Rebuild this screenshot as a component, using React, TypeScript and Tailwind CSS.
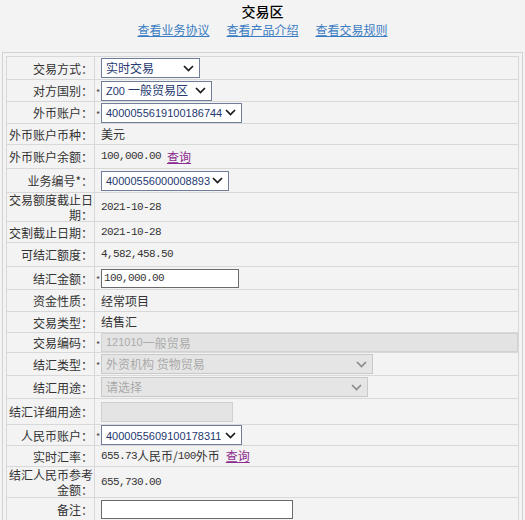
import React from "react";

const cjk = "font-['Noto_Sans_CJK_SC',sans-serif]";
const mono = "font-['Liberation_Mono',monospace] text-[11px] tracking-[-0.6px] text-[#333]";

function Chevron({ muted }: { muted?: boolean }) {
  return (
    <svg width="11" height="7" viewBox="0 0 11 7" className="shrink-0">
      <polyline
        points="1,1 5.5,5.5 10,1"
        fill="none"
        stroke={muted ? "#8a8a8a" : "#1a1a1a"}
        strokeWidth="1.7"
      />
    </svg>
  );
}

function Star({ on }: { on?: boolean }) {
  return (
    <span className="w-[5px] shrink-0 pt-[3px] text-[9px] leading-none text-[#444]">
      {on ? "*" : ""}
    </span>
  );
}

function Select({
  w,
  children,
  muted,
}: {
  w: string;
  children: React.ReactNode;
  muted?: boolean;
}) {
  return (
    <div
      className={`flex h-[20px] items-center justify-between border pl-[4px] pr-[5px] ${w} ${
        muted
          ? "border-[#c9c9c9] bg-[#e5e5e5] text-[#a9a9a9]"
          : "border-[#6f7d98] bg-white text-[#25386f]"
      }`}
    >
      <span className="truncate">{children}</span>
      <Chevron muted={muted} />
    </div>
  );
}

function Row({
  label,
  h,
  children,
}: {
  label: React.ReactNode;
  h: string;
  children?: React.ReactNode;
}) {
  return (
    <div className={`flex border-b border-[#d8d8d8] ${h}`}>
      <div className="flex w-[88px] shrink-0 items-center justify-end whitespace-nowrap border-r border-[#d8d8d8] pr-[1px] text-right text-[12px] leading-[15px] text-[#333]">
        {label}
      </div>
      <div className="flex min-w-0 flex-1 items-center pl-[1px] text-[12px] text-[#333]">
        {children}
      </div>
    </div>
  );
}

function Query() {
  return <span className={`${cjk} ml-[6px] text-[12px] text-[#8b2c8e] underline`}>查询</span>;
}

export default function App() {
  return (
    <div className={`${cjk} h-[520px] w-[525px] overflow-hidden bg-[#f3f3f3]`}>
      {/* title + help links */}
      <div className="flex h-[52px] flex-col items-center pt-[3px]">
        <div className="text-[14px] leading-[17px] font-medium text-black">交易区</div>
        <div className="mt-[2px] flex gap-[17px] text-[12px] leading-[15px] text-[#3a7cc3] underline">
          <span>查看业务协议</span>
          <span>查看产品介绍</span>
          <span>查看交易规则</span>
        </div>
      </div>

      <div className="mx-[2px] border border-[#d2d2d2] px-[3px] pt-[3px]">
        <div className="border-x border-t border-[#d8d8d8]">
          <Row label="交易方式：" h="h-[23px]">
            <Star />
            <Select w="w-[99px]">实时交易</Select>
          </Row>
          <Row label="对方国别：" h="h-[22px]">
            <Star on />
            <Select w="w-[111px]">
              <span className="font-['Liberation_Sans',sans-serif] text-[11px]">Z00 </span>
              <span className="text-[12px]">一般贸易区</span>
            </Select>
          </Row>
          <Row label="外币账户：" h="h-[22px]">
            <Star on />
            <Select w="w-[141px]">
              <span className="font-['Liberation_Sans',sans-serif] text-[11px]">4000055619100186744</span>
            </Select>
          </Row>
          <Row label="外币账户币种：" h="h-[21px]">
            <Star />
            <span>美元</span>
          </Row>
          <Row label="外币账户余额：" h="h-[24px]">
            <Star />
            <span className={mono}>100,000.00</span>
            <Query />
          </Row>
          <Row label="业务编号*：" h="h-[24px]">
            <Star />
            <Select w="w-[128px]">
              <span className="font-['Liberation_Sans',sans-serif] text-[11px]">40000556000008893</span>
            </Select>
          </Row>
          <Row
            label={
              <span>
                交易额度截止日
                <br />
                期：
              </span>
            }
            h="h-[29px]"
          >
            <Star />
            <span className={mono}>2021-10-28</span>
          </Row>
          <Row label="交割截止日期：" h="h-[21px]">
            <Star />
            <span className={mono}>2021-10-28</span>
          </Row>
          <Row label="可结汇额度：" h="h-[24px]">
            <Star />
            <span className={mono}>4,582,458.50</span>
          </Row>
          <Row label="结汇金额：" h="h-[23px]">
            <Star on />
            <div className="flex h-[19px] w-[138px] items-center border border-[#6a6a6a] bg-white pl-[2px]">
              <span className={mono}>100,000.00</span>
            </div>
          </Row>
          <Row label="资金性质：" h="h-[22px]">
            <Star />
            <span>经常项目</span>
          </Row>
          <Row label="交易类型：" h="h-[21px]">
            <Star />
            <span>结售汇</span>
          </Row>
          <Row label="交易编码：" h="h-[20px]">
            <Star on />
            <div className="flex h-[19px] flex-1 items-center border border-[#d2d2d2] bg-[#e3e3e3] pl-[4px] text-[12px] text-[#ababab]">
              <span className="font-['Liberation_Sans',sans-serif] text-[11px]">121010</span>
              <span>一般贸易</span>
            </div>
          </Row>
          <Row label="结汇类型：" h="h-[23px]">
            <Star on />
            <Select w="w-[272px]" muted>
              外资机构 货物贸易
            </Select>
          </Row>
          <Row label="结汇用途：" h="h-[23px]">
            <Star />
            <Select w="w-[267px]" muted>
              请选择
            </Select>
          </Row>
          <Row label="结汇详细用途：" h="h-[26px]">
            <Star />
            <div className="h-[20px] w-[132px] border border-[#cfcfcf] bg-[#e4e4e4]" />
          </Row>
          <Row label="人民币账户：" h="h-[21px]">
            <Star on />
            <Select w="w-[141px]">
              <span className="font-['Liberation_Sans',sans-serif] text-[11px]">4000055609100178311</span>
            </Select>
          </Row>
          <Row label="实时汇率：" h="h-[21px]">
            <Star />
            <span className={mono}>655.73</span>
            <span>人民币/</span>
            <span className={mono}>100</span>
            <span>外币</span>
            <Query />
          </Row>
          <Row
            label={
              <span>
                结汇人民币参考
                <br />
                金额：
              </span>
            }
            h="h-[31px]"
          >
            <Star />
            <span className={mono}>655,730.00</span>
          </Row>
          <Row label="备注：" h="h-[24px]">
            <Star />
            <div className="h-[19px] w-[192px] border border-[#6a6a6a] bg-white" />
          </Row>
        </div>
      </div>
    </div>
  );
}
